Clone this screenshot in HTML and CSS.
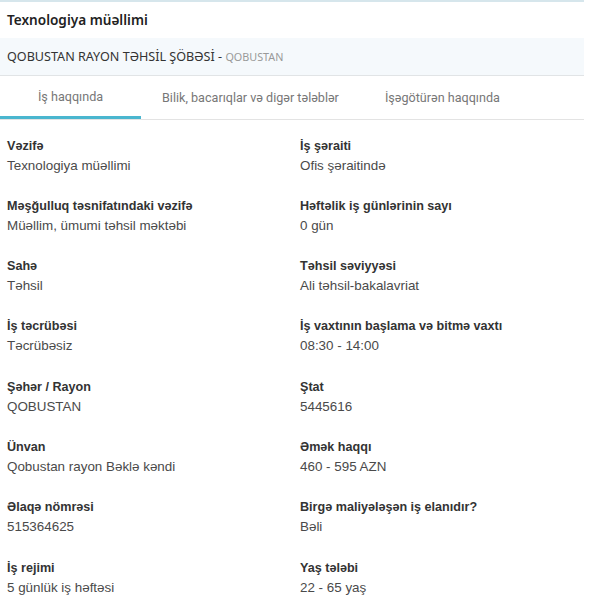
FILE: index.html
```html
<!DOCTYPE html>
<html lang="az">
<head>
<meta charset="utf-8">
<link rel="stylesheet" href="styles.css">
</head>
<body>
<div class="page">
  <div class="title">Texnologiya müəllimi</div>
  <div class="org">QOBUSTAN RAYON TƏHSİL ŞÖBƏSİ - <span class="org-city">QOBUSTAN</span></div>
  <div class="tabs">
    <div class="tab tab-first active">İş haqqında</div>
    <div class="tab">Bilik, bacarıqlar və digər tələblər</div>
    <div class="tab">İşəgötürən haqqında</div>
  </div>
  <div class="grid">
    <div class="field"><div class="label">Vəzifə</div><div class="value">Texnologiya müəllimi</div></div>
    <div class="field"><div class="label">İş şəraiti</div><div class="value">Ofis şəraitində</div></div>
    <div class="field"><div class="label">Məşğulluq təsnifatındaki vəzifə</div><div class="value">Müəllim, ümumi təhsil məktəbi</div></div>
    <div class="field"><div class="label">Həftəlik iş günlərinin sayı</div><div class="value">0 gün</div></div>
    <div class="field"><div class="label">Sahə</div><div class="value">Təhsil</div></div>
    <div class="field"><div class="label">Təhsil səviyyəsi</div><div class="value">Ali təhsil-bakalavriat</div></div>
    <div class="field"><div class="label">İş təcrübəsi</div><div class="value">Təcrübəsiz</div></div>
    <div class="field"><div class="label">İş vaxtının başlama və bitmə vaxtı</div><div class="value">08:30 - 14:00</div></div>
    <div class="field"><div class="label">Şəhər / Rayon</div><div class="value">QOBUSTAN</div></div>
    <div class="field"><div class="label">Ştat</div><div class="value">5445616</div></div>
    <div class="field"><div class="label">Ünvan</div><div class="value">Qobustan rayon Bəklə kəndi</div></div>
    <div class="field"><div class="label">Əmək haqqı</div><div class="value">460 - 595 AZN</div></div>
    <div class="field"><div class="label">Əlaqə nömrəsi</div><div class="value">515364625</div></div>
    <div class="field"><div class="label">Birgə maliyələşən iş elanıdır?</div><div class="value">Bəli</div></div>
    <div class="field"><div class="label">İş rejimi</div><div class="value">5 günlük iş həftəsi</div></div>
    <div class="field"><div class="label">Yaş tələbi</div><div class="value">22 - 65 yaş</div></div>
  </div>
</div>
</body>
</html>
```

FILE: styles.css
```css
html, body {
  margin: 0;
  padding: 0;
  background: #fff;
}
.page {
  width: 584px;
  border-top: 2px solid #d6e6ec;
  font-family: "Liberation Sans", Arial, sans-serif;
}
.title {
  height: 36px;
  line-height: 36px;
  padding-left: 7px;
  font-family: "Noto Sans", "Open Sans", sans-serif;
  font-weight: 600;
  font-size: 13.6px;
  color: #222;
}
.org {
  height: 37px;
  line-height: 37px;
  padding-left: 7px;
  background: #f5f9fc;
  border-bottom: 1px solid #e1e4e6;
  font-family: "Noto Sans", "Open Sans", sans-serif;
  font-size: 12.6px;
  color: #333;
}
.org-city {
  font-size: 10.8px;
  color: #999;
}
.tabs {
  display: flex;
  height: 43px;
  border-bottom: 1px solid #e3e3e3;
}
.tab {
  padding: 0 23px;
  line-height: 44px;
  font-family: Roboto, "Liberation Sans", sans-serif;
  font-size: 12.6px;
  color: #777;
  box-sizing: border-box;
}
.tab:nth-child(2) {
  padding-left: 21px;
}
.tab-first {
  width: 141px;
  padding: 0;
  text-align: center;
}
.tab.active {
  border-bottom: 3px solid #4ab6cf;
  line-height: 41px;
}
.grid {
  display: grid;
  grid-template-columns: 293px 291px;
  padding: 15.5px 0 0 7px;
  row-gap: 20.3px;
}
.field {
  line-height: 20px;
}
.label {
  font-size: 12.6px;
  font-weight: bold;
  color: #333;
}
.value {
  font-size: 13.4px;
  color: #4a4a4a;
}
```
